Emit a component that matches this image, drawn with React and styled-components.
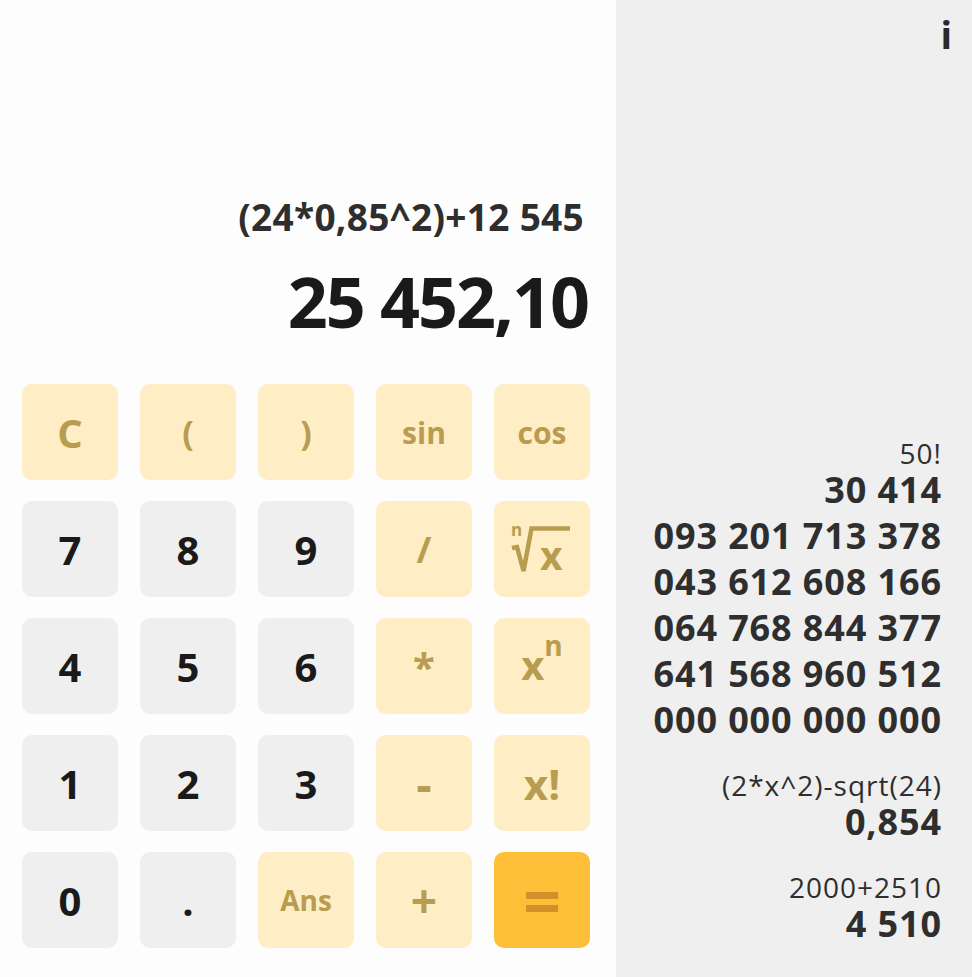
import React from "react";
import styled, { createGlobalStyle } from "styled-components";

const GlobalStyle = createGlobalStyle`
  html, body {
    margin: 0;
    padding: 0;
    height: 100%;
  }
  body {
    font-family: "Open Sans", "Noto Sans", sans-serif;
    background: #fdfdfd;
  }
`;

const Page = styled.div`
  display: flex;
  width: 972px;
  height: 977px;
  overflow: hidden;
`;

const Main = styled.div`
  width: 616px;
  display: flex;
  flex-direction: column;
  justify-content: flex-end;
  background: #fdfdfd;
  padding: 0 26px 29px 22px;
  box-sizing: border-box;
`;

const Display = styled.div`
  text-align: right;
  padding-right: 2px;
`;

const Expression = styled.div`
  font-size: 37px;
  font-weight: 700;
  line-height: 43px;
  letter-spacing: 0.3px;
  color: #2e2e2e;
  margin-right: 4px;
`;

const Result = styled.div`
  font-size: 70px;
  font-weight: 700;
  line-height: 84px;
  letter-spacing: -2px;
  color: #1a1a1a;
  margin-top: 21px;
  margin-bottom: 41px;
`;

const Keypad = styled.div`
  display: grid;
  grid-template-columns: repeat(5, 96px);
  grid-auto-rows: 96px;
  column-gap: 22px;
  row-gap: 21px;
`;

const colors = {
  num: { bg: "#efefef", fg: "#1a1a1a" },
  fn: { bg: "#feedc5", fg: "#b89c4f" },
  eq: { bg: "#fdbe38", fg: "#d1902a" },
};

const Key = styled.button`
  border: none;
  border-radius: 10px;
  padding: 0;
  display: flex;
  align-items: center;
  justify-content: center;
  font-family: inherit;
  font-weight: 700;
  font-size: ${(p) => p.$size || 40}px;
  background: ${(p) => colors[p.$variant].bg};
  color: ${(p) => colors[p.$variant].fg};
  cursor: pointer;
`;

const Power = styled.span`
  display: inline-flex;
  align-items: flex-start;
  font-size: 40px;
  line-height: 1;
  margin-top: -2px;

  sup {
    font-size: 28px;
    line-height: 1;
    margin-top: -14px;
  }
`;

const RootGlyph = styled.span`
  position: relative;
  display: block;
  width: 60px;
  height: 48px;
  margin-left: -2px;
`;

const RootIndex = styled.span`
  position: absolute;
  left: 0;
  top: -4px;
  font-size: 17px;
  line-height: 1;
`;

const RootBase = styled.span`
  position: absolute;
  left: 29px;
  top: 10px;
  font-size: 39px;
  line-height: 1;
`;

const RootSign = styled.svg`
  position: absolute;
  left: 0;
  top: 0;
`;

const Side = styled.aside`
  width: 356px;
  background: #efefef;
  display: flex;
  flex-direction: column;
  justify-content: space-between;
  padding: 12px 30px 30px 0;
  box-sizing: border-box;
`;

const InfoRow = styled.div`
  display: flex;
  justify-content: flex-end;
  margin-right: -10px;
`;

const InfoButton = styled.button`
  border: none;
  background: none;
  padding: 0;
  font-family: inherit;
  font-size: 38px;
  font-weight: 700;
  line-height: 44px;
  color: #2a2a2a;
  cursor: pointer;
`;

const History = styled.div`
  display: flex;
  flex-direction: column;
  gap: 28px;
  text-align: right;
`;

const Entry = styled.div`
  display: flex;
  flex-direction: column;
`;

const EntryExpr = styled.div`
  font-size: 28px;
  line-height: 28px;
  letter-spacing: 1px;
  color: #2e2e2e;
`;

const EntryResult = styled.div`
  font-size: 36px;
  font-weight: 700;
  line-height: 46px;
  letter-spacing: 0.9px;
  color: #2e2e2e;
`;

const history = [
  {
    expr: "50!",
    result: [
      "30 414",
      "093 201 713 378",
      "043 612 608 166",
      "064 768 844 377",
      "641 568 960 512",
      "000 000 000 000",
    ],
  },
  { expr: "(2*x^2)-sqrt(24)", result: ["0,854"] },
  { expr: "2000+2510", result: ["4 510"] },
];

const RootKey = () => (
  <RootGlyph>
    <RootIndex>n</RootIndex>
    <RootSign width="60" height="48" viewBox="0 0 60 48">
      <path
        d="M1 23 L6 22 L12.5 46 L20.5 3.5 L59 3.5"
        fill="none"
        stroke="currentColor"
        strokeWidth="4.5"
        strokeLinejoin="miter"
      />
    </RootSign>
    <RootBase>x</RootBase>
  </RootGlyph>
);

const keys = [
  { label: "C", v: "fn", size: 40 },
  { label: "(", v: "fn", size: 34 },
  { label: ")", v: "fn", size: 34 },
  { label: "sin", v: "fn", size: 30 },
  { label: "cos", v: "fn", size: 30 },
  { label: "7", v: "num" },
  { label: "8", v: "num" },
  { label: "9", v: "num" },
  { label: "/", v: "fn", size: 36 },
  { label: <RootKey />, v: "fn" },
  { label: "4", v: "num" },
  { label: "5", v: "num" },
  { label: "6", v: "num" },
  { label: "*", v: "fn", size: 40 },
  {
    label: (
      <Power>
        x<sup>n</sup>
      </Power>
    ),
    v: "fn",
  },
  { label: "1", v: "num" },
  { label: "2", v: "num" },
  { label: "3", v: "num" },
  { label: "-", v: "fn", size: 48 },
  { label: "x!", v: "fn", size: 42 },
  { label: "0", v: "num" },
  { label: ".", v: "num" },
  { label: "Ans", v: "fn", size: 28 },
  { label: "+", v: "fn", size: 46 },
  { label: "=", v: "eq", size: 66 },
];

export default function App() {
  return (
    <>
      <GlobalStyle />
      <Page>
        <Main>
          <Display>
            <Expression>(24*0,85^2)+12 545</Expression>
            <Result>25 452,10</Result>
          </Display>
          <Keypad>
            {keys.map((k, i) => (
              <Key key={i} $variant={k.v} $size={k.size}>
                {k.label}
              </Key>
            ))}
          </Keypad>
        </Main>
        <Side>
          <InfoRow>
            <InfoButton>i</InfoButton>
          </InfoRow>
          <History>
            {history.map((h, i) => (
              <Entry key={i}>
                <EntryExpr>{h.expr}</EntryExpr>
                {h.result.map((line, j) => (
                  <EntryResult key={j}>{line}</EntryResult>
                ))}
              </Entry>
            ))}
          </History>
        </Side>
      </Page>
    </>
  );
}
